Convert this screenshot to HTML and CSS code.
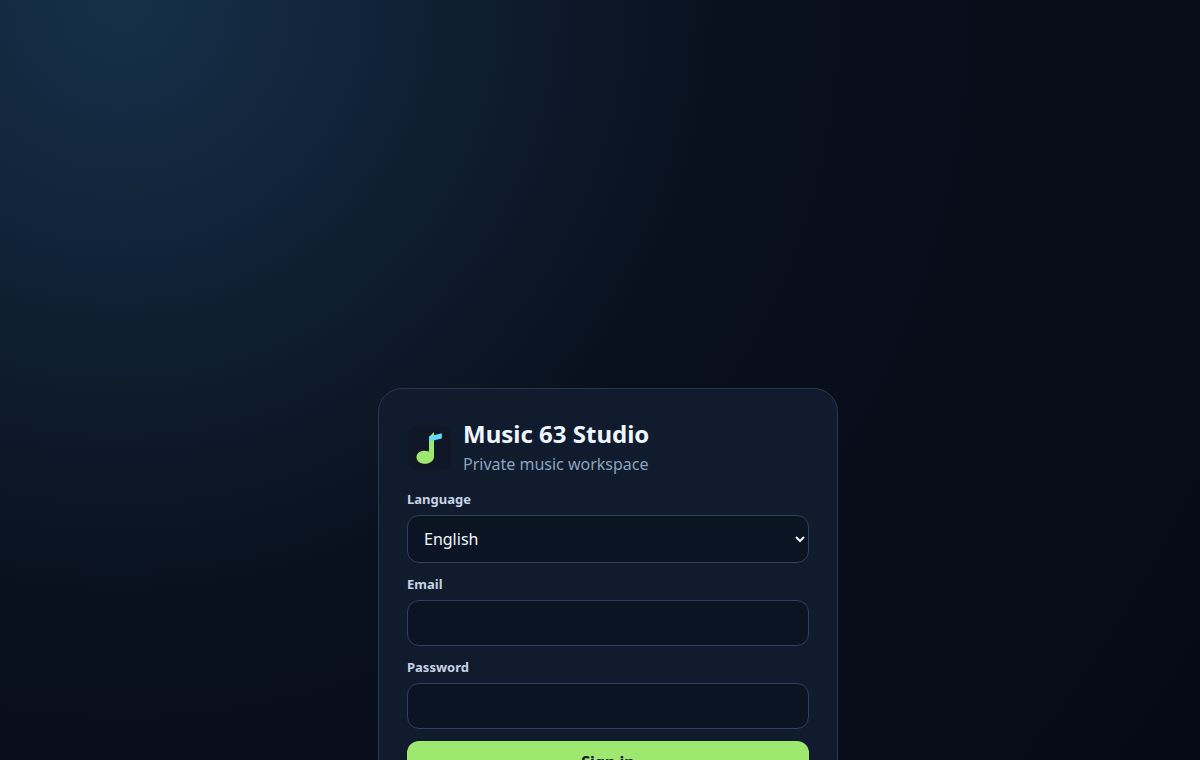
FILE: index.html
```html
<!DOCTYPE html>
<html lang="en">
<head>
    <meta charset="UTF-8">
    <meta name="viewport" content="width=device-width, initial-scale=1.0">
    <title>Music 63 Studio</title>
    <link rel="stylesheet" href="styles.css">
</head>
<body>

<main class="login-page">
    <form class="login-card">
        <div class="brand">
            <svg class="brand-logo" viewBox="0 0 44 44" aria-hidden="true">
                <rect width="44" height="44" rx="10" fill="#101726"/>
                <path d="M22 11l5-5v24.500c0 4.300-4 7.300-9 7.300-5 0-8.500-2.700-8.500-6.500 0-3.900 3.500-6.500 8-6.500 1.800 0 3.200.2 4.500.6z" fill="#9fe870"/>
                <path d="M22 10.500l12.800-3.200v5.200L22 15.500z" fill="#62d9ff"/>
            </svg>
            <div class="brand-text">
                <h1>Music 63 Studio</h1>
                <p>Private music workspace</p>
            </div>
        </div>

        <label for="language">Language</label>
        <select id="language" name="language">
            <option>English</option>
        </select>

        <label for="email">Email</label>
        <input id="email" name="email" type="email" autocomplete="username">

        <label for="password">Password</label>
        <input id="password" name="password" type="password" autocomplete="current-password">

        <button type="submit">Sign in</button>
    </form>
</main>

</body>
</html>
```

FILE: styles.css
```css
* {
    box-sizing: border-box;
}

html {
    color-scheme: dark;
}

body {
    margin: 0;
    min-height: 100vh;
    font-family: "Noto Sans", sans-serif;
    font-size: 16px;
    color: #eef6ff;
    background: radial-gradient(circle at 10% 0, #16304a, #09101d 620px, #050b16 1320px);
    background-attachment: fixed;
}

.login-page {
    padding: 388px 16px 48px 32px;
}

.login-card {
    display: flex;
    flex-direction: column;
    width: 100%;
    max-width: 460px;
    margin: 0 auto;
    padding: 28px;
    background: #101b2d;
    border: 1px solid #263852;
    border-radius: 24px;
}

.brand {
    display: flex;
    align-items: center;
    gap: 12px;
    margin-bottom: 11px;
}

.brand-logo {
    width: 44px;
    height: 44px;
}

.brand-text {
    padding-bottom: 2px;
}

.brand h1 {
    margin: 0;
    font-size: 24px;
    line-height: 34px;
}

.brand p {
    margin: 0;
    line-height: 26px;
    color: #8da2bd;
}

label {
    margin-bottom: 6px;
    font-size: 13px;
    line-height: 19px;
    font-weight: 700;
    color: #c4d3e6;
}

input, select {
    width: 100%;
    margin-bottom: 12px;
    padding: 11px 12px;
    font: inherit;
    color: #eef6ff;
    background: #0a1422;
    border: 1px solid #2d4260;
    border-radius: 12px;
}

button {
    padding: 10px;
    font: inherit;
    font-weight: 700;
    color: #07111f;
    background: #9fe870;
    border: none;
    border-radius: 12px;
    cursor: pointer;
}
```
